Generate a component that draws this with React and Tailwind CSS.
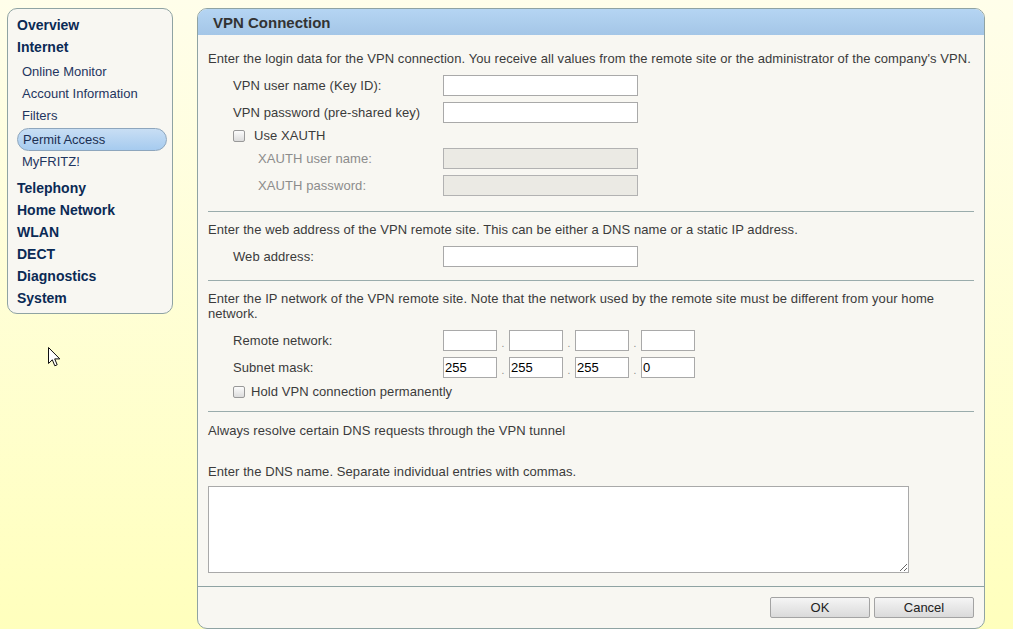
import { useState } from 'react'

const nav = [
  { label: 'Overview', bold: true },
  { label: 'Internet', bold: true },
]

const bottomNav = ['Telephony', 'Home Network', 'WLAN', 'DECT', 'Diagnostics', 'System']

function Checkbox({ checked, onChange }) {
  return (
    <button
      type="button"
      onClick={onChange}
      className="w-[12px] h-[12px] rounded-[2px] border border-[#999] bg-gradient-to-b from-[#fcfcfc] to-[#dcdcdc] flex items-center justify-center shrink-0"
    >
      {checked && (
        <svg width="9" height="9" viewBox="0 0 9 9">
          <path d="M1 4.5 L3.5 7 L8 1.5" fill="none" stroke="#333" strokeWidth="1.5" />
        </svg>
      )}
    </button>
  )
}

function Field({ label, disabled, className = '' }) {
  return (
    <div className={'flex items-center h-[21px] ' + className}>
      <label className={(disabled ? 'pl-[50px] w-[235px] text-[#8c8c8c]' : 'pl-[25px] w-[235px]')}>{label}</label>
      <input
        disabled={disabled}
        className={
          'w-[195px] h-[21px] border px-[2px] outline-none text-black ' +
          (disabled ? 'bg-[#ebeae4] border-[#b2b2b2]' : 'bg-white border-[#a9a9a9]')
        }
      />
    </div>
  )
}

function IpRow({ label, values, className = '' }) {
  return (
    <div className={'flex items-center h-[21px] ' + className}>
      <label className="pl-[25px] w-[235px]">{label}</label>
      {values.map((v, i) => (
        <div key={i} className="flex items-end">
          {i > 0 && <span className="w-[12px] text-center text-[10px] leading-[14px] text-[#888]">.</span>}
          <input
            defaultValue={v}
            className="w-[54px] h-[21px] border border-[#a9a9a9] bg-white px-[1px] outline-none text-black"
          />
        </div>
      ))}
    </div>
  )
}

export default function App() {
  const [xauth, setXauth] = useState(false)
  const [hold, setHold] = useState(false)

  return (
    <div className="relative w-full h-screen overflow-hidden bg-gradient-to-b from-[#fffeea] to-[#ffffbd] flex items-start pl-[7px] pt-[8px] font-['Liberation_Sans',Arial,sans-serif] text-[13px] leading-[16px] text-[#3b3b3b]">
      {/* left navigation */}
      <div className="w-[166px] shrink-0 rounded-[10px] border border-[#8fa3a3] bg-[#f8f7f2] pt-[5px] pb-[4px]">
        {nav.map((n) => (
          <div key={n.label} className="h-[22px] flex items-center pl-[9px] text-[14px] font-bold text-[#0b2a55]">
            {n.label}
          </div>
        ))}
        <div className="mt-[3px] text-[#1f3560]">
          <div className="h-[22px] flex items-center pl-[14px]">Online Monitor</div>
          <div className="h-[22px] flex items-center pl-[14px]">Account Information</div>
          <div className="h-[22px] flex items-center pl-[14px]">Filters</div>
          <div className="mt-[1px] ml-[9px] mr-[5px] h-[23px] flex items-center pl-[5px] rounded-full border border-[#8ea6bd] bg-gradient-to-b from-[#c8def4] to-[#a6cbef] text-[#1b2f52]">
            Permit Access
          </div>
          <div className="h-[21px] flex items-center pl-[14px]">MyFRITZ!</div>
        </div>
        <div className="mt-[5px]">
          {bottomNav.map((n) => (
            <div key={n} className="h-[22px] flex items-center pl-[9px] text-[14px] font-bold text-[#0b2a55]">
              {n}
            </div>
          ))}
        </div>
      </div>

      {/* main panel */}
      <div className="ml-[24px] w-[788px] shrink-0 rounded-[10px] border border-[#8fa3a3] bg-[#f8f7f2] overflow-hidden">
        <div className="h-[26px] flex items-center pl-[15px] pt-[1px] bg-gradient-to-b from-[#b5d5f3] to-[#a4c6e7] text-[15px] font-bold text-[#333]">
          VPN Connection
        </div>

        <div className="px-[10px] pt-[16px] tracking-[0.08px]">
          <p>Enter the login data for the VPN connection. You receive all values from the remote site or the administrator of the company's VPN.</p>
          <Field label="VPN user name (Key ID):" className="mt-[8px]" />
          <Field label="VPN password (pre-shared key)" className="mt-[6px]" />
          <div className="mt-[5px] h-[16px] flex items-center pl-[25px]">
            <Checkbox checked={xauth} onChange={() => setXauth(!xauth)} />
            <span className="ml-[9px]">Use XAUTH</span>
          </div>
          <Field label="XAUTH user name:" disabled={!xauth} className="mt-[4px]" />
          <Field label="XAUTH password:" disabled={!xauth} className="mt-[6px]" />

          <div className="mt-[15px] border-t border-[#9aacac]" />

          <p className="mt-[10px]">Enter the web address of the VPN remote site. This can be either a DNS name or a static IP address.</p>
          <Field label="Web address:" className="mt-[8px]" />

          <div className="mt-[13px] border-t border-[#9aacac]" />

          <p className="mt-[10px] leading-[15px]">
            Enter the IP network of the VPN remote site. Note that the network used by the remote site must be different from your home network.
          </p>
          <IpRow label="Remote network:" values={['', '', '', '']} className="mt-[9px]" />
          <IpRow label="Subnet mask:" values={['255', '255', '255', '0']} className="mt-[6px]" />
          <div className="mt-[6px] h-[16px] flex items-center pl-[25px]">
            <Checkbox checked={hold} onChange={() => setHold(!hold)} />
            <span className="ml-[6px]">Hold VPN connection permanently</span>
          </div>

          <div className="mt-[11px] border-t border-[#9aacac]" />

          <p className="mt-[11px]">Always resolve certain DNS requests through the VPN tunnel</p>
          <p className="mt-[25px]">Enter the DNS name. Separate individual entries with commas.</p>
          <textarea className="mt-[6px] block w-[701px] h-[87px] border border-[#a9a9a9] bg-white outline-none p-[2px] text-black" />
          <div className="h-[13px]" />
        </div>

        <div className="border-t border-[#8fa3a3] flex justify-end gap-[4px] pt-[10px] pb-[10px] pr-[10px]">
          <button className="w-[100px] h-[21px] rounded-[2px] border border-[#a3a3a3] bg-gradient-to-b from-[#f5f5f5] to-[#dadada] text-[#222]">OK</button>
          <button className="w-[100px] h-[21px] rounded-[2px] border border-[#a3a3a3] bg-gradient-to-b from-[#f5f5f5] to-[#dadada] text-[#222]">Cancel</button>
        </div>
      </div>

      {/* mouse pointer */}
      <svg className="absolute left-[48px] top-[347px]" width="13" height="20" viewBox="0 0 13 20">
        <path d="M0.5 0.5 L0.5 16.5 L4.3 12.8 L6.8 18.8 L9.2 17.8 L6.7 11.9 L11.8 11.9 Z" fill="#fff" stroke="#111" strokeWidth="1" strokeLinejoin="round" />
      </svg>
    </div>
  )
}
